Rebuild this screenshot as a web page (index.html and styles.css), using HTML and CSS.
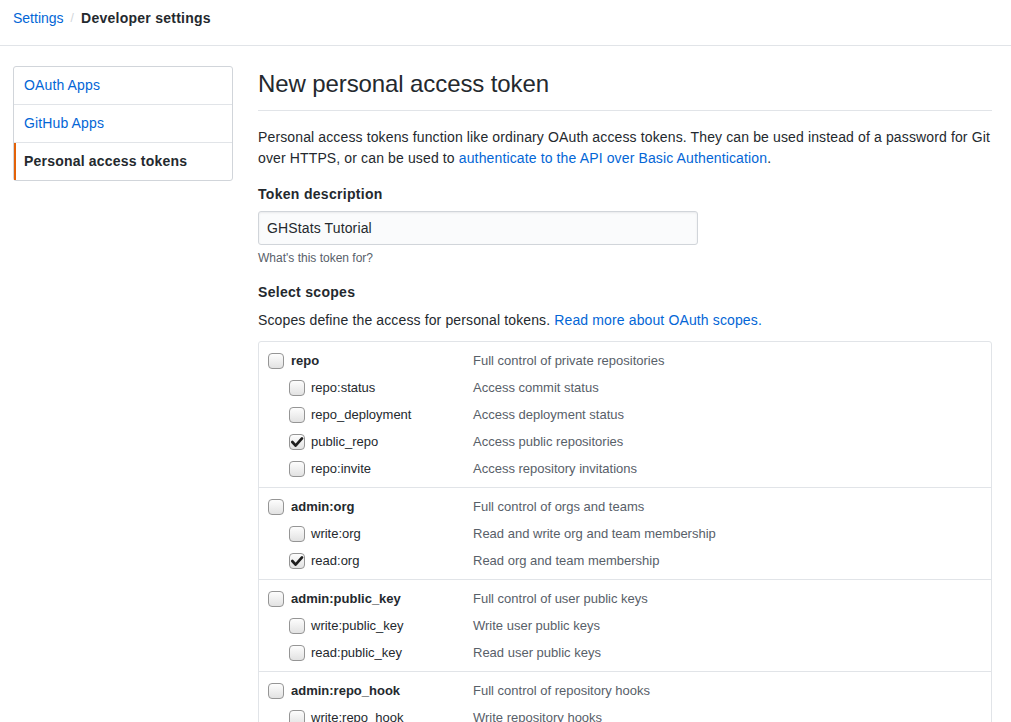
FILE: index.html
```html
<!DOCTYPE html>
<html lang="en">
<head>
<meta charset="utf-8">
<title>New personal access token</title>
<link rel="stylesheet" href="styles.css">
</head>
<body>
<header class="crumbs">
  <a class="crumb-link" href="#">Settings</a>
  <span class="crumb-sep">/</span>
  <span class="crumb-current">Developer settings</span>
</header>
<div class="layout">
  <nav class="menu">
    <a class="menu-item" href="#">OAuth Apps</a>
    <a class="menu-item" href="#">GitHub Apps</a>
    <a class="menu-item selected" href="#">Personal access tokens</a>
  </nav>
  <main class="content">
    <h1 class="subhead">New personal access token</h1>
    <p class="intro">Personal access tokens function like ordinary OAuth access tokens. They can be used instead of a password for Git over HTTPS, or can be used to <a href="#">authenticate to the API over Basic Authentication</a>.</p>
    <div class="form-group">
      <label class="form-label">Token description</label>
      <div class="input">GHStats Tutorial</div>
      <p class="note">What's this token for?</p>
    </div>
    <h2 class="form-label scopes-title">Select scopes</h2>
    <p class="scopes-desc">Scopes define the access for personal tokens. <a href="#">Read more about OAuth scopes.</a></p>
    <div class="scopes">
      <div class="group">
        <div class="row top"><span class="cb"></span><span class="name">repo</span><span class="desc">Full control of private repositories</span></div>
        <div class="row sub"><span class="cb"></span><span class="name">repo:status</span><span class="desc">Access commit status</span></div>
        <div class="row sub"><span class="cb"></span><span class="name">repo_deployment</span><span class="desc">Access deployment status</span></div>
        <div class="row sub"><span class="cb"><svg viewBox="0 0 16 16" width="16" height="16"><path d="M3.3 8 L6.6 11.6 L13 4.4" fill="none" stroke="#1e1e1e" stroke-width="2.7" stroke-linecap="round" stroke-linejoin="round"/></svg></span><span class="name">public_repo</span><span class="desc">Access public repositories</span></div>
        <div class="row sub"><span class="cb"></span><span class="name">repo:invite</span><span class="desc">Access repository invitations</span></div>
      </div>
      <div class="group">
        <div class="row top"><span class="cb"></span><span class="name">admin:org</span><span class="desc">Full control of orgs and teams</span></div>
        <div class="row sub"><span class="cb"></span><span class="name">write:org</span><span class="desc">Read and write org and team membership</span></div>
        <div class="row sub"><span class="cb"><svg viewBox="0 0 16 16" width="16" height="16"><path d="M3.3 8 L6.6 11.6 L13 4.4" fill="none" stroke="#1e1e1e" stroke-width="2.7" stroke-linecap="round" stroke-linejoin="round"/></svg></span><span class="name">read:org</span><span class="desc">Read org and team membership</span></div>
      </div>
      <div class="group">
        <div class="row top"><span class="cb"></span><span class="name">admin:public_key</span><span class="desc">Full control of user public keys</span></div>
        <div class="row sub"><span class="cb"></span><span class="name">write:public_key</span><span class="desc">Write user public keys</span></div>
        <div class="row sub"><span class="cb"></span><span class="name">read:public_key</span><span class="desc">Read user public keys</span></div>
      </div>
      <div class="group">
        <div class="row top"><span class="cb"></span><span class="name">admin:repo_hook</span><span class="desc">Full control of repository hooks</span></div>
        <div class="row sub"><span class="cb"></span><span class="name">write:repo_hook</span><span class="desc">Write repository hooks</span></div>
        <div class="row sub"><span class="cb"></span><span class="name">read:repo_hook</span><span class="desc">Read repository hooks</span></div>
      </div>
    </div>
  </main>
</div>
</body>
</html>
```
FILE: styles.css
```css
html, body {
  margin: 0;
  padding: 0;
  background: #fff;
}
body {
  font-family: "Liberation Sans", Arial, Helvetica, sans-serif;
  font-size: 14px;
  line-height: 1.5;
  color: #24292e;
  overflow: hidden;
  letter-spacing: 0.13px;
}
a {
  color: #0366d6;
  text-decoration: none;
}
.crumbs {
  display: flex;
  align-items: center;
  height: 46px;
  padding: 0 13px 9px;
  box-sizing: border-box;
  border-bottom: 1px solid #e1e4e8;
  font-size: 14px;
}
.crumb-link {
  letter-spacing: 0;
}
.crumb-sep {
  color: #d1d5da;
  margin: 0 7px 0 7px;
  font-size: 12px;
}
.crumb-current {
  font-weight: bold;
  letter-spacing: 0.25px;
}
.layout {
  display: flex;
  padding: 20px 19px 0 13px;
  gap: 25px;
}
.menu {
  width: 220px;
  flex: none;
  align-self: flex-start;
  border: 1px solid #d1d5da;
  border-radius: 3px;
  box-sizing: border-box;
}
.menu-item {
  display: block;
  height: 38px;
  box-sizing: border-box;
  padding: 8px 10px;
  line-height: 21px;
  border-bottom: 1px solid #e1e4e8;
}
.menu-item:last-child {
  border-bottom: 0;
  height: 37px;
}
.menu-item.selected {
  font-weight: bold;
  color: #24292e;
  border-left: 2px solid #e36209;
  padding-left: 8px;
  letter-spacing: 0.2px;
}
.content {
  flex: 1;
  min-width: 0;
}
.subhead {
  margin: 0;
  font-size: 24px;
  font-weight: normal;
  line-height: 36px;
  padding-bottom: 8px;
  border-bottom: 1px solid #e1e4e8;
  letter-spacing: -0.1px;
}
.intro {
  margin: 16px 0 0;
  line-height: 21px;
}
.form-group {
  margin-top: 15px;
}
.form-label {
  display: block;
  font-weight: bold;
  font-size: 14px;
  line-height: 21px;
  margin: 0;
  letter-spacing: 0.3px;
}
.input {
  margin-top: 6px;
  width: 440px;
  height: 34px;
  box-sizing: border-box;
  padding: 6px 8px;
  line-height: 20px;
  font-size: 14px;
  background: #fafbfc;
  border: 1px solid #d1d5da;
  border-radius: 3px;
  box-shadow: inset 0 1px 2px rgba(27,31,35,0.075);
}
.note {
  margin: 4px 0 0;
  font-size: 12px;
  line-height: 18px;
  color: #586069;
  letter-spacing: 0;
}
.scopes-title {
  margin-top: 15px;
}
.scopes-desc {
  margin: 7px 0 0;
  line-height: 21px;
}
.scopes {
  margin-top: 10px;
  border: 1px solid #e1e4e8;
  border-radius: 3px;
  letter-spacing: 0;
}
.group {
  padding: 5px 0 5px;
  border-bottom: 1px solid #e1e4e8;
}
.group:last-child {
  border-bottom: 0;
}
.row {
  display: flex;
  align-items: center;
  height: 27px;
  font-size: 13px;
  padding-left: 9px;
}
.row.sub {
  padding-left: 30px;
}
.cb {
  width: 16px;
  height: 16px;
  flex: none;
  box-sizing: border-box;
  border: 1px solid #959595;
  border-radius: 4px;
  background: linear-gradient(#fdfdfd, #e2e2e2);
  margin-right: 7px;
  position: relative;
}
.row.sub .cb {
  margin-right: 6px;
}
.cb svg {
  position: absolute;
  left: -1px;
  top: -1px;
}
.name {
  width: 182px;
  flex: none;
}
.row.sub .name {
  width: 162px;
}
.row.top .name {
  font-weight: bold;
}
.desc {
  color: #586069;
}
```
